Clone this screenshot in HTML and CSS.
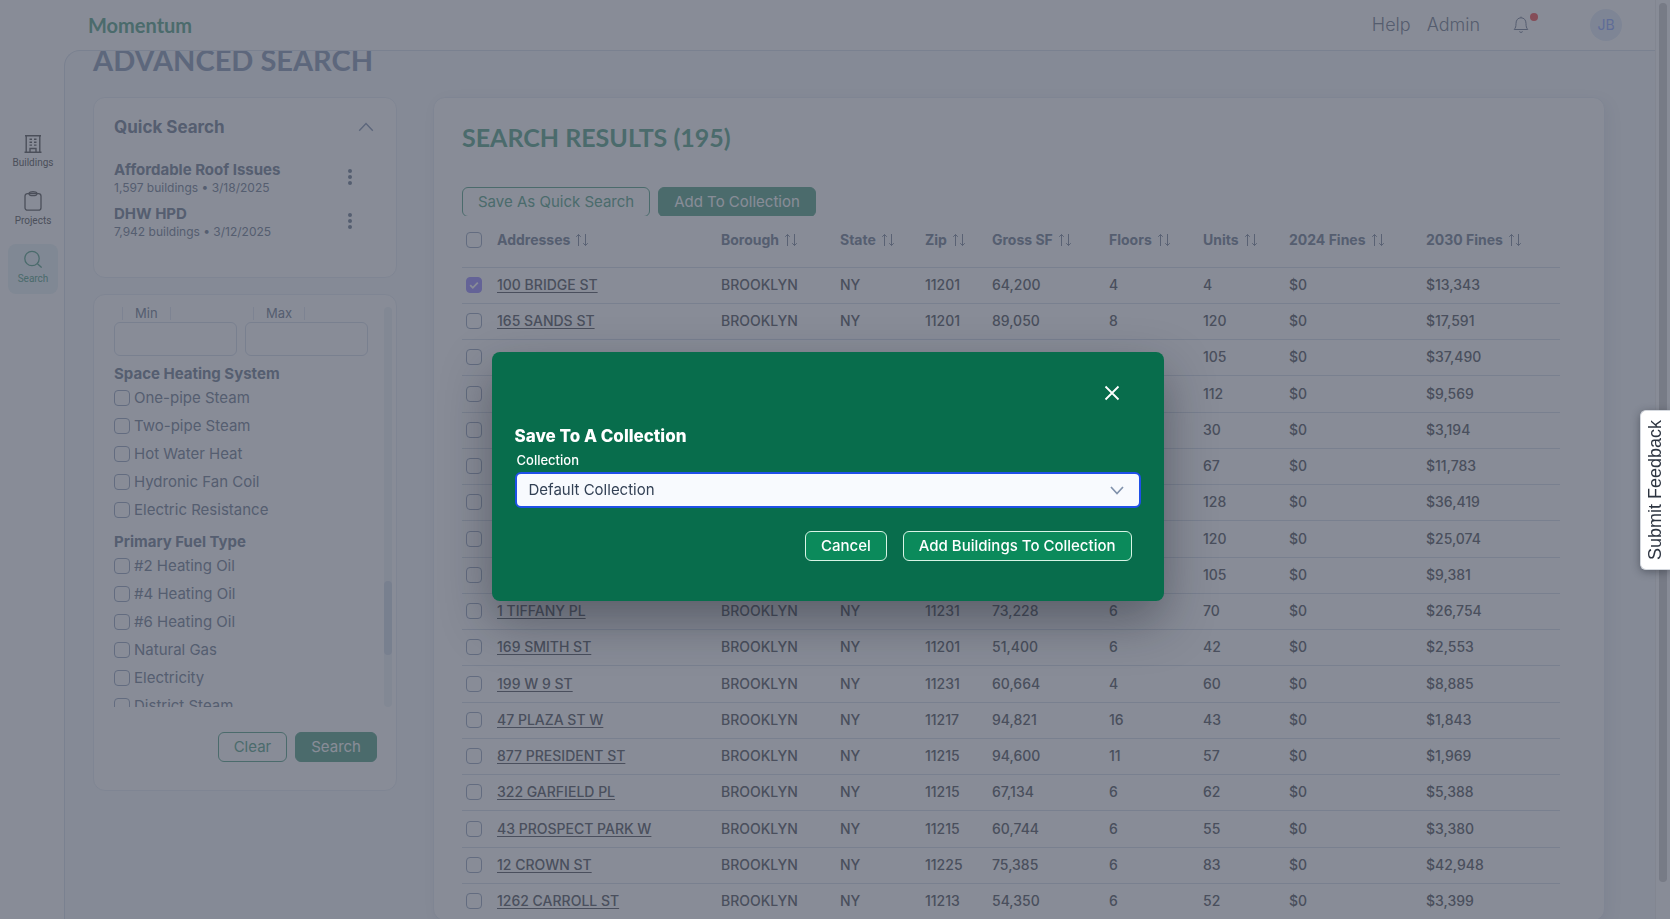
FILE: index.html
```html
<!DOCTYPE html>
<html lang="en">
<head>
  <meta charset="UTF-8" />
  <meta name="viewport" content="width=device-width, initial-scale=1" />
  <title>Momentum - Advanced Search</title>
  <link rel="stylesheet" href="styles.css">
</head>
<body>
  <div class="app">
    <header class="topbar">
      <a class="brand" href="#">Momentum</a>
      <nav class="top-links">
        <a href="#">Help</a>
        <a href="#">Admin</a>
      </nav>
      <button class="bell" type="button" aria-label="Notifications">
        <svg width="16" height="18" viewBox="0 0 16 18" fill="none" stroke="currentColor">
          <path d="M1.2 13.5 C2.6 11.8 3 10.5 3 7.5 C3 4 5 1.8 8 1.8 C11 1.8 13 4 13 7.5 C13 10.5 13.4 11.8 14.8 13.5 Z" />
          <path d="M8 0.6 V1.8 M6.3 15.6 Q8 17.4 9.7 15.6" />
        </svg>
        <span class="bell-dot"></span>
      </button>
      <span class="avatar">JB</span>
    </header>

    <nav class="sidebar">
      <a class="nav-item" href="#">
        <svg width="18" height="20" viewBox="0 0 18 20" fill="none" stroke="currentColor" stroke-width="1.4">
          <path d="M2.2 19 V2.7 H15.8 V19 M0.5 19.3 H17.5 M1 2.7 H17 M6 19 V15.5 H12 V19" />
          <path d="M5.5 6.3 H8 M10 6.3 H12.5 M5.5 9.2 H8 M10 9.2 H12.5 M5.5 12.1 H8 M10 12.1 H12.5" />
        </svg>
        <span>Buildings</span>
      </a>
      <a class="nav-item" href="#">
        <svg width="18" height="20" viewBox="0 0 18 20" fill="none" stroke="currentColor" stroke-width="1.3">
          <rect x="1" y="2.6" width="16" height="16.6" rx="2.5" />
          <path d="M5 2.4 C5 5.4 13 5.4 13 2.4 C13 0.2 5 0.2 5 2.4 Z" />
        </svg>
        <span>Projects</span>
      </a>
      <a class="nav-item active" href="#">
        <svg width="18" height="20" viewBox="0 0 18 20" fill="none" stroke="currentColor" stroke-width="1.3">
          <circle cx="8" cy="9.5" r="7.2" />
          <path d="M13.2 14.5 L17.6 18.6" />
        </svg>
        <span>Search</span>
      </a>
    </nav>

    <main class="main">
      <h1>ADVANCED SEARCH</h1>
      <div class="columns">
        <div class="filters">
          <section class="card quick">
            <div class="quick-head">
              <h2>Quick Search</h2>
              <button class="icon-btn" type="button" aria-label="Collapse">
                <svg width="16" height="10" viewBox="0 0 16 10" fill="none" stroke="currentColor" stroke-width="1.4"><path d="M1.2 8.8 L8 1.5 L14.8 8.8" /></svg>
              </button>
            </div>
            <div class="saved">
              <div>
                <h3>Affordable Roof Issues</h3>
                <p>1,597 buildings • 3/18/2025</p>
              </div>
              <button class="icon-btn dots" type="button" aria-label="Options">
                <svg width="4" height="16" viewBox="0 0 4 16" fill="currentColor"><circle cx="2" cy="2" r="2" /><circle cx="2" cy="8" r="2" /><circle cx="2" cy="14" r="2" /></svg>
              </button>
            </div>
            <div class="saved">
              <div>
                <h3>DHW HPD</h3>
                <p>7,942 buildings • 3/12/2025</p>
              </div>
              <button class="icon-btn dots" type="button" aria-label="Options">
                <svg width="4" height="16" viewBox="0 0 4 16" fill="currentColor"><circle cx="2" cy="2" r="2" /><circle cx="2" cy="8" r="2" /><circle cx="2" cy="14" r="2" /></svg>
              </button>
            </div>
          </section>

          <form class="card search-form">
            <div class="scroll-area">
              <div class="options">
                <div class="range">
                  <div class="field">
                    <label for="min">Min</label>
                    <input type="text" id="min">
                  </div>
                  <div class="field">
                    <label for="max">Max</label>
                    <input type="text" id="max">
                  </div>
                </div>
                <h3>Space Heating System</h3>
                <label class="option"><input type="checkbox"> One-pipe Steam</label>
                <label class="option"><input type="checkbox"> Two-pipe Steam</label>
                <label class="option"><input type="checkbox"> Hot Water Heat</label>
                <label class="option"><input type="checkbox"> Hydronic Fan Coil</label>
                <label class="option"><input type="checkbox"> Electric Resistance</label>
                <h3>Primary Fuel Type</h3>
                <label class="option"><input type="checkbox"> #2 Heating Oil</label>
                <label class="option"><input type="checkbox"> #4 Heating Oil</label>
                <label class="option"><input type="checkbox"> #6 Heating Oil</label>
                <label class="option"><input type="checkbox"> Natural Gas</label>
                <label class="option"><input type="checkbox"> Electricity</label>
                <label class="option"><input type="checkbox"> District Steam</label>
              </div>
              <div class="track"><div class="thumb"></div></div>
            </div>
            <div class="form-actions">
              <button class="btn outline" type="button">Clear</button>
              <button class="btn solid" type="button">Search</button>
            </div>
          </form>
        </div>

        <section class="card results">
          <h2>SEARCH RESULTS (195)</h2>
          <div class="result-actions">
            <button class="btn outline" type="button">Save As Quick Search</button>
            <button class="btn solid" type="button">Add To Collection</button>
          </div>
          <table class="results-table">
            <colgroup>
              <col class="col-check"><col><col class="col-borough"><col class="col-state"><col class="col-zip">
              <col class="col-gross"><col class="col-floors"><col class="col-units"><col class="col-2024"><col class="col-2030">
            </colgroup>
            <thead><tr id="head-row"></tr></thead>
            <tbody id="rows"></tbody>
          </table>
        </section>
      </div>
    </main>
  </div>

  <div class="overlay">
    <div class="page-track"><div class="page-thumb"></div></div>
  </div>

  <div class="modal-wrap">
    <form class="modal" role="dialog" aria-labelledby="modal-title">
      <button class="close" type="button" aria-label="Close">
        <svg width="16" height="16" viewBox="0 0 16 16" stroke="currentColor" stroke-width="1.8"><path d="M1.5 1.5 L14.5 14.5 M14.5 1.5 L1.5 14.5" /></svg>
      </button>
      <h2 id="modal-title">Save To A Collection</h2>
      <label for="collection">Collection</label>
      <div class="select">
        <select id="collection">
          <option>Default Collection</option>
        </select>
        <svg width="14" height="9" viewBox="0 0 14 9" fill="none" stroke="currentColor" stroke-width="1.7"><path d="M1 1 L7 7.5 L13 1" /></svg>
      </div>
      <div class="modal-actions">
        <button class="btn light" type="button">Cancel</button>
        <button class="btn light" type="submit">Add Buildings To Collection</button>
      </div>
    </form>
  </div>

  <button class="feedback" type="button">Submit Feedback</button>

  <script>
    const heads = ['Addresses', 'Borough', 'State', 'Zip', 'Gross SF', 'Floors', 'Units', '2024 Fines', '2030 Fines'];
    const sortIcon = '<svg class="sort" width="14" height="14" viewBox="0 0 14 14" fill="none" stroke="currentColor" stroke-width="0.9"><path d="M3.5 13 V1.5 M1.2 3.8 L3.5 1.5 L5.8 3.8 M10.5 1 V12.5 M8.2 10.2 L10.5 12.5 L12.8 10.2" /></svg>';

    const buildings = [
      ['100 BRIDGE ST', 'BROOKLYN', 'NY', '11201', '64,200', '4', '4', '$0', '$13,343'],
      ['165 SANDS ST', 'BROOKLYN', 'NY', '11201', '89,050', '8', '120', '$0', '$17,591'],
      ['', '', '', '', '', '', '105', '$0', '$37,490'],
      ['', '', '', '', '', '', '112', '$0', '$9,569'],
      ['', '', '', '', '', '', '30', '$0', '$3,194'],
      ['', '', '', '', '', '', '67', '$0', '$11,783'],
      ['', '', '', '', '', '', '128', '$0', '$36,419'],
      ['', '', '', '', '', '', '120', '$0', '$25,074'],
      ['', '', '', '', '', '', '105', '$0', '$9,381'],
      ['1 TIFFANY PL', 'BROOKLYN', 'NY', '11231', '73,228', '6', '70', '$0', '$26,754'],
      ['169 SMITH ST', 'BROOKLYN', 'NY', '11201', '51,400', '6', '42', '$0', '$2,553'],
      ['199 W 9 ST', 'BROOKLYN', 'NY', '11231', '60,664', '4', '60', '$0', '$8,885'],
      ['47 PLAZA ST W', 'BROOKLYN', 'NY', '11217', '94,821', '16', '43', '$0', '$1,843'],
      ['877 PRESIDENT ST', 'BROOKLYN', 'NY', '11215', '94,600', '11', '57', '$0', '$1,969'],
      ['322 GARFIELD PL', 'BROOKLYN', 'NY', '11215', '67,134', '6', '62', '$0', '$5,388'],
      ['43 PROSPECT PARK W', 'BROOKLYN', 'NY', '11215', '60,744', '6', '55', '$0', '$3,380'],
      ['12 CROWN ST', 'BROOKLYN', 'NY', '11225', '75,385', '6', '83', '$0', '$42,948'],
      ['1262 CARROLL ST', 'BROOKLYN', 'NY', '11213', '54,350', '6', '52', '$0', '$3,399'],
    ];

    document.getElementById('head-row').innerHTML =
      '<th><input type="checkbox" aria-label="Select all"></th>' +
      heads.map((h) => `<th>${h}${sortIcon}</th>`).join('');

    document.getElementById('rows').innerHTML = buildings.map((b, i) => `
      <tr>
        <td><input type="checkbox" aria-label="Select building"${i === 0 ? ' checked' : ''}></td>
        <td><a href="#">${b[0]}</a></td>
        ${b.slice(1).map((v) => `<td>${v}</td>`).join('')}
      </tr>`).join('');
  </script>
</body>
</html>
```

FILE: styles.css
```css
* {
  box-sizing: border-box;
}

body {
  margin: 0;
  height: 100vh;
  overflow: hidden;
  font-family: Inter, sans-serif;
  font-size: 14px;
  line-height: 20px;
  color: #98a2b0;
  background: #fff;
}

h1, h2, h3, p {
  margin: 0;
}

a {
  color: inherit;
  text-decoration: none;
}

button, input, select {
  font: inherit;
  color: inherit;
}

button {
  cursor: pointer;
}

.app {
  display: grid;
  grid-template: 50px 1fr / 64px 1fr;
  height: 100vh;
  padding-right: 15px;
}

/* top bar */
.topbar {
  grid-column: 1 / 3;
  display: flex;
  align-items: center;
  padding: 0 33px 0 88px;
}

.brand {
  margin-right: auto;
  font-family: Lato, sans-serif;
  font-size: 20px;
  font-weight: bold;
  color: #84bca8;
}

.top-links {
  display: flex;
  gap: 16px;
  font-size: 18px;
  font-weight: 300;
  color: #98a0ac;
}

.bell {
  position: relative;
  margin: 0 61px 0 33px;
  padding: 0;
  border: 0;
  background: none;
  line-height: 0;
  color: #98a0b0;
}

.bell-dot {
  position: absolute;
  top: -3px;
  right: -9px;
  width: 8px;
  height: 8px;
  border-radius: 50%;
  background: #f88080;
}

.avatar {
  width: 32px;
  height: 32px;
  border-radius: 50%;
  background: #eaf1fb;
  font-size: 14px;
  line-height: 32px;
  text-align: center;
  color: #adc0ff;
}

/* side nav */
.sidebar {
  display: flex;
  flex-direction: column;
  gap: 8px;
  padding: 78px 6px 0 8px;
}

.nav-item {
  display: flex;
  flex-direction: column;
  align-items: center;
  gap: 2px;
  height: 50px;
  padding-top: 5px;
  border-radius: 8px;
  font-family: Roboto, sans-serif;
  font-size: 10px;
  line-height: 16px;
  color: #858585;
}

.nav-item.active {
  background: #eef6f8;
  color: #84bca8;
}

/* page */
.main {
  overflow: hidden;
  padding-left: 28px;
  padding-right: 50px;
  border-top: 1px solid #e2e8f0;
  border-left: 1px solid #e2e8f0;
  border-top-left-radius: 16px;
  background: #f8fafc;
}

h1 {
  margin: -7px 0 21px;
  font-family: Lato, sans-serif;
  font-size: 29px;
  line-height: 32px;
  color: #a8b4c8;
}

.columns {
  display: flex;
  align-items: flex-start;
  gap: 36px;
}

.filters {
  flex: none;
  width: 304px;
}

.card {
  border: 1px solid #edf1f6;
  border-radius: 12px;
  background: #fff;
}

.quick {
  height: 181px;
  padding: 19px 20px;
  margin-bottom: 16px;
}

.quick-head {
  display: flex;
  align-items: center;
  justify-content: space-between;
  height: 20px;
  margin-bottom: 23px;
  padding-right: 2px;
}

.quick-head h2 {
  font-size: 17px;
}

.icon-btn {
  padding: 0;
  border: 0;
  background: none;
  line-height: 0;
  color: #a8b4c8;
}

.saved {
  display: flex;
  align-items: center;
  justify-content: space-between;
  margin-bottom: 8px;
}

.saved h3 {
  font-size: 15px;
  line-height: 19px;
}

.saved p {
  font-size: 12px;
  line-height: 17px;
}

.dots {
  margin-right: 24px;
  margin-bottom: 2px;
  color: #98a2b0;
}

.search-form {
  padding: 12px 4px 28px 20px;
}

.scroll-area {
  display: flex;
  justify-content: space-between;
  height: 400px;
  overflow: hidden;
}

.options {
  width: 254px;
  font-size: 15px;
}

.options h3 {
  margin-top: 8px;
  font-size: 15px;
}

.range {
  display: grid;
  grid-template-columns: 1fr 1fr;
  gap: 8px;
}

.field {
  display: flex;
  flex-direction: column;
  align-items: flex-start;
  gap: 2px;
}

.field label {
  height: 13px;
  margin-left: 8px;
  padding: 0 12px;
  border: solid #e8edf4;
  border-width: 0 1px;
  font-size: 13px;
  line-height: 13px;
}

.field input {
  width: 100%;
  height: 34px;
  border: 1px solid #e0e6ef;
  border-radius: 6px;
  background: #fff;
}

.option {
  display: flex;
  align-items: center;
  gap: 4px;
  height: 28px;
}

input[type="checkbox"] {
  appearance: none;
  width: 16px;
  height: 16px;
  margin: 0;
  border: 1px solid #b4bed0;
  border-radius: 4px;
  background: #fff;
}

input[type="checkbox"]:checked {
  border-color: #b6acff;
  background: #b6acff url("data:image/svg+xml,%3Csvg xmlns='http://www.w3.org/2000/svg' viewBox='0 0 14 14' fill='none' stroke='white' stroke-width='1.8'%3E%3Cpath d='M3.2 7.2 L5.8 9.8 L10.8 4.6'/%3E%3C/svg%3E");
}

.track {
  width: 8px;
  border-radius: 4px;
  background: #f3f6f9;
}

.thumb {
  height: 74px;
  margin-top: 274px;
  border-radius: 4px;
  background: #dfe6ee;
}

.form-actions {
  display: flex;
  justify-content: flex-end;
  gap: 8px;
  margin-top: 25px;
  padding-right: 15px;
}

.btn {
  height: 30px;
  padding: 0 15px;
  border: 1px solid #84bca8;
  border-radius: 6px;
  font-size: 15px;
  line-height: 20px;
  white-space: nowrap;
}

.outline {
  background: #fff;
  color: #84bca8;
}

.solid {
  background: #84bca8;
  color: #fff;
}

/* results */
.results {
  flex: 1;
  min-width: 0;
  padding: 23px 44px 0 28px;
  box-shadow: 4px 4px 16px rgba(30, 50, 90, 0.06);
}

.results h2 {
  font-family: Lato, sans-serif;
  font-size: 25px;
  line-height: 32px;
  color: #84bca8;
}

.result-actions {
  display: flex;
  gap: 8px;
  height: 29px;
  margin-top: 34px;
  overflow: hidden;
}

.results-table {
  width: 100%;
  table-layout: fixed;
  border-collapse: collapse;
}

.col-check { width: 35px; }
.col-borough { width: 119px; }
.col-state { width: 85px; }
.col-zip { width: 67px; }
.col-gross { width: 117px; }
.col-floors { width: 94px; }
.col-units { width: 86px; }
.col-2024 { width: 137px; }
.col-2030 { width: 134px; }

.results-table tr {
  height: 36px;
  border-bottom: 1px solid #e0e6ee;
}

.results-table tbody tr:nth-child(4n) {
  height: 37px;
}

.results-table th {
  height: 51px;
  padding: 0 0 3px;
  text-align: left;
  font-size: 14px;
  white-space: nowrap;
}

.results-table td {
  padding: 0;
  font-weight: 500;
  color: #82858a;
  white-space: nowrap;
}

.results-table td a {
  text-decoration: underline;
  text-underline-offset: 2px;
}

.results-table input {
  display: block;
  margin-left: 4px;
}

.sort {
  margin-left: 5px;
  vertical-align: -2px;
}

/* modal */
.overlay {
  position: fixed;
  inset: 0;
  background: rgba(18, 26, 48, 0.5);
}

.page-track {
  position: absolute;
  top: 0;
  right: 0;
  width: 15px;
  height: 100%;
  padding: 3px 3px 0 3px;
  border-left: 1px solid rgba(18, 26, 48, 0.05);
}

.page-thumb {
  width: 8px;
  height: 96%;
  border-radius: 4px;
  background: #777b86;
}

.modal-wrap {
  position: fixed;
  inset: 0 15px 0 0;
  display: flex;
  align-items: center;
  justify-content: center;
  padding-top: 33px;
}

.modal {
  display: flex;
  flex-direction: column;
  width: 672px;
  padding: 32px 23px 40px;
  border-radius: 8px;
  background: #086d4c;
  box-shadow: 0 20px 50px rgba(20, 24, 34, 0.4);
  color: #fff;
}

.close {
  align-self: flex-end;
  margin-right: 21px;
  padding: 0;
  border: 0;
  background: none;
  height: 18px;
  line-height: 0;
}

.modal h2 {
  margin-top: 24px;
  font-size: 17px;
  font-weight: 800;
}

.modal label {
  margin: 4px 0 2px 2px;
  font-size: 13px;
  font-weight: 500;
}

.select {
  position: relative;
  color: #8092ac;
}

.select select {
  appearance: none;
  width: 100%;
  height: 36px;
  padding: 0 12px;
  border: 2px solid #1f50e8;
  border-radius: 6px;
  background: #f8fafe;
  font-size: 15px;
  color: #334155;
}

.select svg {
  position: absolute;
  top: 14px;
  right: 17px;
}

.modal-actions {
  display: flex;
  justify-content: flex-end;
  gap: 16px;
  margin: 23px 9px 0 0;
}

.light {
  border-color: #d8f5e6;
  background: #0b8a5b;
  color: #fff;
  font-weight: 500;
}

.feedback {
  position: fixed;
  right: 0;
  top: 410px;
  width: 30px;
  height: 160px;
  padding: 0 0 0 1px;
  border: 1px solid #d4d8de;
  border-left: 0;
  border-radius: 0 6px 6px 0;
  background: #fff;
  box-shadow: 0 -2px 8px rgba(20, 24, 34, 0.4);
  font-family: "Liberation Sans", Arial, sans-serif;
  font-size: 18px;
  color: #2c3440;
  writing-mode: vertical-rl;
  transform: rotate(180deg);
}
```
